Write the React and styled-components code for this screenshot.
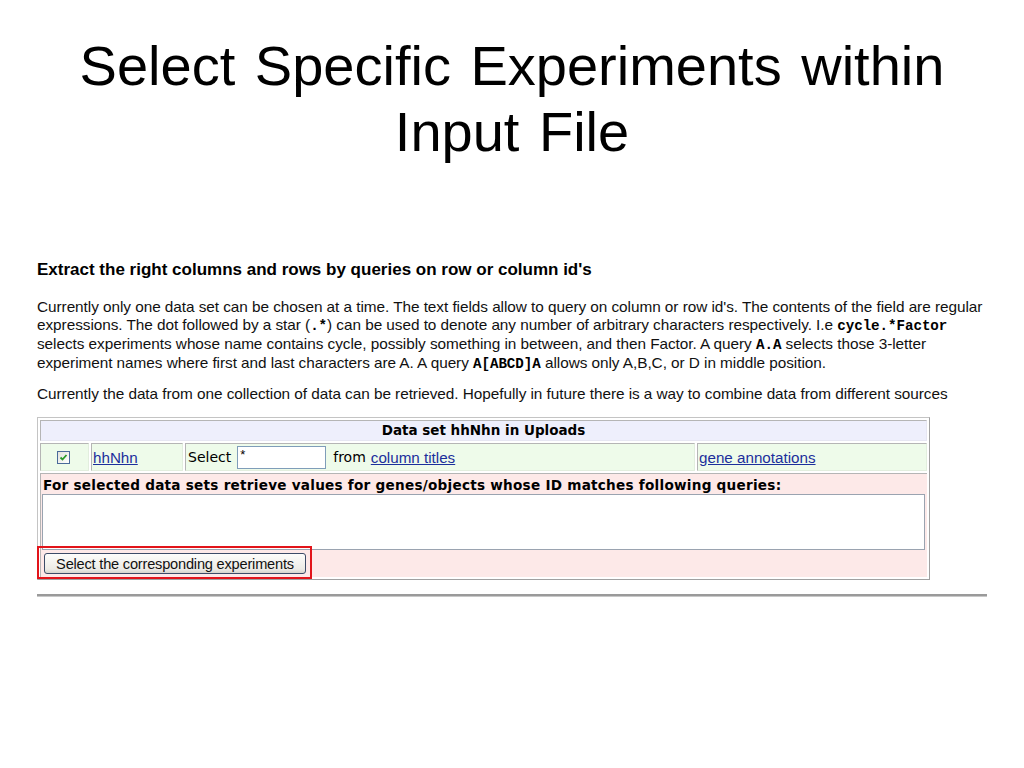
import React from "react";
import styled, { createGlobalStyle } from "styled-components";

const Global = createGlobalStyle`
  html, body { margin: 0; padding: 0; background: #fff; }
  body { font-family: "Liberation Sans", Arial, sans-serif; color: #000; }
`;

const Page = styled.div`
  width: 1024px;
  height: 768px;
  overflow: hidden;
  display: flex;
  flex-direction: column;
`;

const Title = styled.h1`
  margin: 33px 0 0;
  text-align: center;
  font-family: "Liberation Sans", Arial, sans-serif;
  font-weight: normal;
  font-size: 56px;
  line-height: 66px;
  word-spacing: 4px;
`;

const Content = styled.div`
  margin-top: 95px;
  padding: 0 37px;
`;

const Heading = styled.h2`
  margin: 0;
  font-size: 17px;
  font-weight: bold;
  line-height: 20px;
  white-space: nowrap;
`;

const Para = styled.p`
  margin: ${(p) => p.$top || 0}px 0 0;
  font-size: 15.35px;
  line-height: 18px;
  white-space: nowrap;
  letter-spacing: -0.05px;
  color: #111;
`;

const Code = styled.code`
  font-family: "Liberation Mono", "Courier New", monospace;
  font-weight: bold;
  font-size: 14.2px;
  color: #000;
`;

const Frame = styled.div`
  position: relative;
  margin-top: 14px;
  width: 893px;
  box-sizing: border-box;
  border: 1px solid #c4c4c4;
  border-right-color: #a0a0a0;
  border-bottom-color: #a0a0a0;
  padding: 2px;
  display: flex;
  flex-direction: column;
  gap: 2px;
  font-family: "DejaVu Sans", Verdana, sans-serif;
  font-size: 13.5px;
`;

const HeaderCell = styled.div`
  background: #eeeffc;
  border-top: 1px solid #b5b5b5;
  border-left: 1px solid #b5b5b5;
  border-bottom: 1px solid #e6e6f2;
  border-right: 1px solid #e6e6f2;
  height: 21px;
  box-sizing: border-box;
  line-height: 19px;
  text-align: center;
  font-weight: bold;
`;

const Row = styled.div`
  display: flex;
  gap: 2px;
`;

const GreenCell = styled.div`
  background: #eefbea;
  border-top: 1px solid #b5b5b5;
  border-left: 1px solid #b5b5b5;
  border-bottom: 1px solid #e2eede;
  border-right: 1px solid #e2eede;
  height: 28px;
  display: flex;
  align-items: center;
  padding: 0 ${(p) => p.$pad ?? 1}px;
  width: ${(p) => p.$w}px;
  box-sizing: border-box;
  flex: ${(p) => (p.$grow ? 1 : "none")};
  justify-content: ${(p) => (p.$center ? "center" : "flex-start")};
  gap: 6px;
  font-size: 14px;
`;

const Link = styled.a`
  font-family: "Liberation Sans", Arial, sans-serif;
  font-size: 15.2px;
  color: #1c2f9c;
  text-decoration: underline;
  cursor: pointer;
  margin-left: ${(p) => p.$ml || 0}px;
`;

const Check = styled.span`
  width: 11px;
  height: 11px;
  margin-right: 2px;
  border: 1px solid #4a6a9a;
  background: linear-gradient(135deg, #e2e2dc, #ffffff);
  display: inline-flex;
  align-items: center;
  justify-content: center;
`;

const TextInput = styled.input`
  width: 89px;
  height: 23px;
  box-sizing: border-box;
  border: 1px solid #7f9db9;
  padding: 0 2px 6px;
  font-family: "Liberation Sans", Arial, sans-serif;
  font-size: 13px;
  margin-right: 1px;
`;

const Pink = styled.div`
  background: #fde9e8;
  border-top: 1px solid #b5b5b5;
  border-left: 1px solid #b5b5b5;
  display: flex;
  flex-direction: column;
  padding: 2px 2px 3px 1px;
`;

const PinkLabel = styled.div`
  font-weight: bold;
  font-size: 13.6px;
  line-height: 18px;
  padding-left: 1px;
  letter-spacing: 0.25px;
  white-space: nowrap;
`;

const Area = styled.textarea`
  margin: 0;
  height: 56px;
  box-sizing: border-box;
  border: 1px solid #9aa3b0;
  background: #fff;
  resize: none;
`;

const ButtonRow = styled.div`
  padding: 3px 0 0 2px;
  display: flex;
`;

const Button = styled.button`
  font-family: "Liberation Sans", Arial, sans-serif;
  font-size: 14.6px;
  letter-spacing: -0.2px;
  height: 21px;
  width: 262px;
  padding: 0;
  border: 1px solid #3c4c68;
  border-radius: 3px;
  background: linear-gradient(#fdfdfb, #ecebe6 80%, #d6d4cc);
  color: #111;
`;

const Highlight = styled.div`
  position: absolute;
  left: -1px;
  top: 128px;
  width: 275px;
  height: 33px;
  box-sizing: border-box;
  border: 2px solid #e2141a;
  pointer-events: none;
`;

const Rule = styled.hr`
  margin: 14px 0 0;
  width: 950px;
  border: none;
  border-top: 2px solid #9a9a9a;
  border-bottom: 1px solid #c8c8c8;
  height: 0;
`;

export default function App() {
  return (
    <Page>
      <Global />
      <Title>
        Select Specific Experiments within
        <br />
        Input File
      </Title>
      <Content>
        <Heading>Extract the right columns and rows by queries on row or column id's</Heading>
        <Para $top={18}>
          Currently only one data set can be chosen at a time. The text fields allow to query on column or row id's. The contents of the field are regular
          <br />
          expressions. The dot followed by a star (<Code>.*</Code>) can be used to denote any number of arbitrary characters respectively. I.e <Code>cycle.*Factor</Code>
          <br />
          selects experiments whose name contains cycle, possibly something in between, and then Factor. A query <Code>A.A</Code> selects those 3-letter
          <br />
          experiment names where first and last characters are A. A query <Code>A[ABCD]A</Code> allows only A,B,C, or D in middle position.
        </Para>
        <Para $top={12}>
          Currently the data from one collection of data can be retrieved. Hopefully in future there is a way to combine data from different sources
        </Para>
        <Frame>
          <HeaderCell>Data set hhNhn in Uploads</HeaderCell>
          <Row>
            <GreenCell $w={49} $center>
              <Check>
                <svg width="9" height="9" viewBox="0 0 9 9">
                  <path d="M1.5 4.5 L3.5 6.5 L7.5 2" fill="none" stroke="#2a9a2a" strokeWidth="1.8" />
                </svg>
              </Check>
            </GreenCell>
            <GreenCell $w={92}>
              <Link>hhNhn</Link>
            </GreenCell>
            <GreenCell $w={510} $pad={2}>
              <span>Select</span>
              <TextInput defaultValue="*" />
              <span>from</span>
              <Link $ml={-1}>column titles</Link>
            </GreenCell>
            <GreenCell $grow>
              <Link>gene annotations</Link>
            </GreenCell>
          </Row>
          <Pink>
            <PinkLabel>For selected data sets retrieve values for genes/objects whose ID matches following queries:</PinkLabel>
            <Area />
            <ButtonRow>
              <Button>Select the corresponding experiments</Button>
            </ButtonRow>
          </Pink>
          <Highlight />
        </Frame>
        <Rule />
      </Content>
    </Page>
  );
}
